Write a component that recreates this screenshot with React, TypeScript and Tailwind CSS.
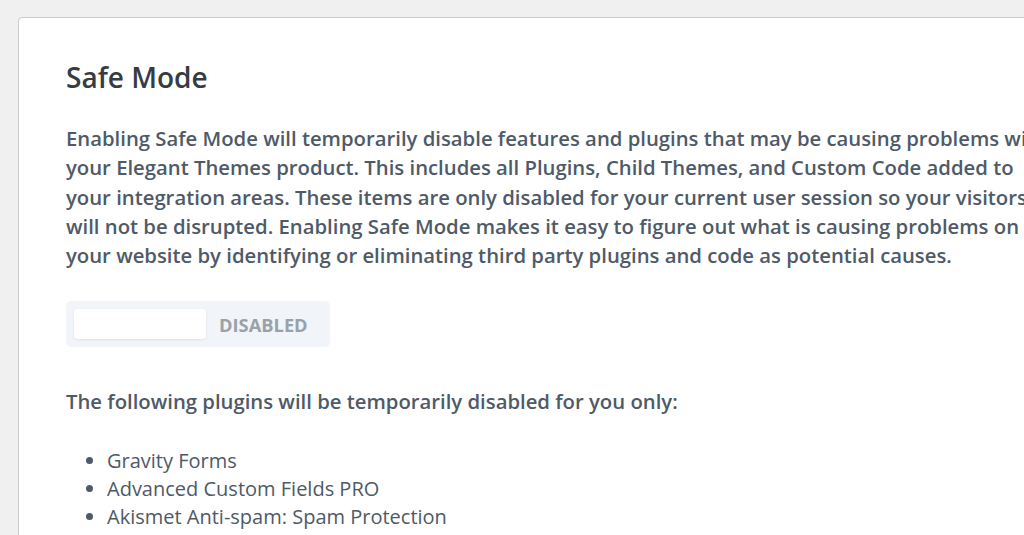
import React from 'react';

const plugins = ['Gravity Forms', 'Advanced Custom Fields PRO', 'Akismet Anti-spam: Spam Protection'];

const App = () => {
  return (
    <div className="h-[535px] bg-[#f0f0f1] pt-[17px] pl-[18px] overflow-hidden" style={{ fontFamily: '"Open Sans", sans-serif' }}>
      <div className="w-[1100px] bg-white border border-[#c9cacc] rounded-tl-[4px] pl-[47px] pt-[41px] pb-10">
        {/* Title */}
        <h1 className="text-[28px] leading-[36px] font-semibold text-[#363c42]">Safe Mode</h1>

        {/* Description */}
        <p className="mt-[29px] w-[990px] text-[20.3px] leading-[29.3px] font-semibold text-[#4e5a68]">
          Enabling Safe Mode will temporarily disable features and plugins that may be causing problems with your Elegant Themes product. This includes all Plugins, Child Themes, and Custom Code added to your integration areas. These items are only disabled for your current user session so your visitors will not be disrupted. Enabling Safe Mode makes it easy to figure out what is causing problems on your website by identifying or eliminating third party plugins and code as potential causes.
        </p>

        {/* Toggle */}
        <div className="mt-[31px] inline-flex items-center w-[264px] h-[46px] p-2 bg-[#f1f4f9] rounded-[5px]">
          <div className="w-[132px] h-[30px] bg-white rounded-[4px] shadow-[0_1px_3px_rgba(0,0,0,0.08)]" />
          <span className="ml-[13px] text-[18.3px] font-bold text-[#9ba1a8]">DISABLED</span>
        </div>

        {/* Plugins */}
        <p className="mt-[40px] text-[20.3px] leading-[29px] font-semibold text-[#4e5a68]">
          The following plugins will be temporarily disabled for you only:
        </p>
        <ul className="mt-[31px] pl-[41px] list-disc text-[20px] leading-[28px] text-[#4e5a68] marker:text-[#4e5a68]">
          {plugins.map((p) => (
            <li key={p}>{p}</li>
          ))}
        </ul>
      </div>
    </div>
  );
};

export default App;
